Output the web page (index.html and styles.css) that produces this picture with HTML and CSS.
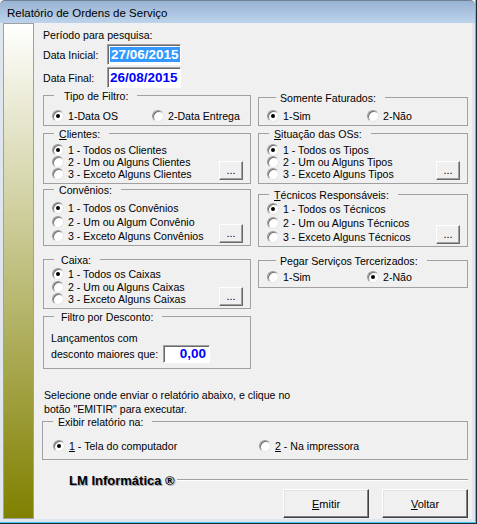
FILE: index.html
```html
<!DOCTYPE html>
<html lang="pt-BR">
    <head>
        <meta charset="UTF-8" />
        <title>Relatório de Ordens de Serviço</title>
        <link rel="stylesheet" href="styles.css">
    </head>
    <body>
        <div class="window">
        <div class="window-edge">
            <div class="titlebar">Relatório de Ordens de Serviço</div>
            <div class="frame">
                <div class="side-strip"></div>
                <div class="content">
                    <div class="caption">Período para pesquisa:</div>
                    <div class="date-row">
                        <span class="date-label">Data Inicial:</span>
                        <div class="date-box"><span class="selected">27/06/2015</span></div>
                    </div>
                    <div class="date-row">
                        <span class="date-label">Data Final:</span>
                        <div class="date-box">26/08/2015</div>
                    </div>

                    <div class="columns">
                        <div class="column">
                            <div class="group tipo">
                                <div class="group-title"><span>Tipo de Filtro:</span></div>
                                <div class="group-body">
                                    <div class="opts-2">
                                        <div class="opt"><i class="radio on"></i>1-Data OS</div>
                                        <div class="opt"><i class="radio"></i>2-Data Entrega</div>
                                    </div>
                                </div>
                            </div>

                            <div class="group clientes">
                                <div class="group-title"><span><u>C</u>lientes:</span></div>
                                <div class="group-body list rows-12">
                                    <div class="opts">
                                        <div class="opt"><i class="radio on"></i>1 - Todos os Clientes</div>
                                        <div class="opt"><i class="radio"></i>2 - Um ou Alguns Clientes</div>
                                        <div class="opt"><i class="radio"></i>3 - Exceto Alguns Clientes</div>
                                    </div>
                                    <button class="more">...</button>
                                </div>
                            </div>

                            <div class="group convenios">
                                <div class="group-title"><span>Convênios:</span></div>
                                <div class="group-body list rows-14">
                                    <div class="opts">
                                        <div class="opt"><i class="radio on"></i>1 - Todos os Convênios</div>
                                        <div class="opt"><i class="radio"></i>2 - Um ou Algum Convênio</div>
                                        <div class="opt"><i class="radio"></i>3 - Exceto Alguns Convênios</div>
                                    </div>
                                    <button class="more">...</button>
                                </div>
                            </div>

                            <div class="group caixa">
                                <div class="group-title"><span>Caixa:</span></div>
                                <div class="group-body list rows-125">
                                    <div class="opts">
                                        <div class="opt"><i class="radio on"></i>1 - Todos os Caixas</div>
                                        <div class="opt"><i class="radio"></i>2 - Um ou Alguns Caixas</div>
                                        <div class="opt"><i class="radio"></i>3 - Exceto Alguns Caixas</div>
                                    </div>
                                    <button class="more">...</button>
                                </div>
                            </div>

                            <div class="group desconto">
                                <div class="group-title"><span>Filtro por Desconto:</span></div>
                                <div class="group-body">
                                    <div class="desc-line">Lançamentos com</div>
                                    <div class="desc-row">
                                        <span class="desc-label">desconto maiores que:</span>
                                        <div class="num-box">0,00</div>
                                    </div>
                                </div>
                            </div>
                        </div>

                        <div class="column">
                            <div class="group somente">
                                <div class="group-title"><span>Somente Faturados:</span></div>
                                <div class="group-body">
                                    <div class="opts-2">
                                        <div class="opt"><i class="radio on"></i>1-Sim</div>
                                        <div class="opt"><i class="radio"></i>2-Não</div>
                                    </div>
                                </div>
                            </div>

                            <div class="group situacao">
                                <div class="group-title"><span><u>S</u>ituação das OSs:</span></div>
                                <div class="group-body list rows-12">
                                    <div class="opts">
                                        <div class="opt"><i class="radio on"></i>1 - Todos os Tipos</div>
                                        <div class="opt"><i class="radio"></i>2 - Um ou Alguns Tipos</div>
                                        <div class="opt"><i class="radio"></i>3 - Exceto Alguns Tipos</div>
                                    </div>
                                    <button class="more">...</button>
                                </div>
                            </div>

                            <div class="group tecnicos">
                                <div class="group-title"><span><u>T</u>écnicos Responsáveis:</span></div>
                                <div class="group-body list rows-14">
                                    <div class="opts">
                                        <div class="opt"><i class="radio on"></i>1 - Todos os Técnicos</div>
                                        <div class="opt"><i class="radio"></i>2 - Um ou Alguns Técnicos</div>
                                        <div class="opt"><i class="radio"></i>3 - Exceto Alguns Técnicos</div>
                                    </div>
                                    <button class="more">...</button>
                                </div>
                            </div>

                            <div class="group pegar">
                                <div class="group-title"><span>Pegar Serviços Tercerizados:</span></div>
                                <div class="group-body">
                                    <div class="opts-2">
                                        <div class="opt"><i class="radio"></i>1-Sim</div>
                                        <div class="opt"><i class="radio on"></i>2-Não</div>
                                    </div>
                                </div>
                            </div>
                        </div>
                    </div>

                    <p class="hint">Selecione onde enviar o relatório abaixo, e clique no<br>botão "EMITIR" para executar.</p>

                    <div class="group saida">
                        <div class="group-title"><span>Exibir relatório na:</span></div>
                        <div class="group-body">
                            <div class="opts-out">
                                <div class="opt"><i class="radio on"></i><u>1</u>&nbsp;- Tela do computador</div>
                                <div class="opt"><i class="radio"></i><u>2</u>&nbsp;- Na impressora</div>
                            </div>
                        </div>
                    </div>

                    <div class="brand"><span>LM Informática ®</span></div>

                    <div class="actions">
                        <button class="btn"><u>E</u>mitir</button>
                        <button class="btn"><u>V</u>oltar</button>
                    </div>
                </div>
            </div>
        </div>
        </div>
    </body>
</html>
```

FILE: styles.css
```css
* {
    box-sizing: border-box;
}
body {
    margin: 0;
    font-family: "Liberation Sans", Arial, sans-serif;
    font-size: 10.6px;
    color: #000;
    background: #f0f0f0;
}
.window {
    width: 477px;
    height: 524px;
    border-right: 1px solid #1d2a38;
    border-bottom: 1px solid #1d2a38;
}
.window-edge {
    height: 100%;
    display: flex;
    flex-direction: column;
    border-right: 1px solid #3fc6f0;
    border-bottom: 1px solid #3fc6f0;
}
.titlebar {
    height: 23px;
    padding: 2px 0 0 7px;
    line-height: 21px;
    font-size: 11.5px;
    background: linear-gradient(#98b3d3, #bcd3eb);
    border-top: 1px solid #6f8194;
    border-radius: 5px 5px 0 0;
}
.frame {
    flex: 1;
    display: flex;
    padding: 0 3px 3px 3px;
    background: #dfe6ee;
}
.side-strip {
    width: 31px;
    border: 1px solid #a0a0a0;
    background: linear-gradient(#fff, #808000);
}
.content {
    flex: 1;
    display: flex;
    flex-direction: column;
    padding: 6px 4px 0 9px;
    background: #f0f0f0;
}
.caption {
    line-height: 13px;
}
.date-row {
    display: flex;
    align-items: center;
    height: 21px;
    margin-top: 2px;
}
.date-label {
    width: 64px;
}
.date-box {
    width: 74px;
    height: 21px;
    padding: 2px 0 0 2px;
    background: #fff;
    border: 1px solid;
    border-color: #a0a0a0 #fff #fff #a0a0a0;
    box-shadow: inset 1px 1px 0 #696969;
    font-size: 13.5px;
    font-weight: bold;
    line-height: 15px;
    color: #0000ff;
}
.date-box .selected {
    display: inline-block;
    padding: 0 1px;
    background: #3399ff;
    color: #fff;
}
.columns {
    display: grid;
    grid-template-columns: 208px 210px;
    column-gap: 7px;
    align-items: start;
    margin-top: 2px;
}
.column {
    display: flex;
    flex-direction: column;
}

/* group boxes */
.group {
    display: flex;
    flex-direction: column;
}
.group-title {
    display: flex;
    height: 13px;
    line-height: 13px;
}
.group-title::before,
.group-title::after {
    content: "";
    margin-top: 5px;
    border-top: 1px solid #a0a0a0;
}
.group-title::before {
    width: 10px;
    border-left: 1px solid #a0a0a0;
}
.group-title::after {
    flex: 1;
    border-right: 1px solid #a0a0a0;
}
.group-title span {
    padding: 0 9px 0 5px;
}
.group-body {
    border: 1px solid #a0a0a0;
    border-top: none;
}
.group-body.list {
    display: flex;
    padding-left: 8px;
    padding-right: 7px;
}
.opts {
    flex: 1;
    display: flex;
    flex-direction: column;
}
.opt {
    display: flex;
    align-items: center;
    height: 13px;
    white-space: nowrap;
}
.rows-12 .opt {
    height: 12px;
}
.rows-14 .opt {
    height: 14px;
}
.rows-125 .opt {
    height: 12.5px;
}
.opts-2 {
    display: grid;
    grid-template-columns: 100px auto;
}
.opts-out {
    display: grid;
    grid-template-columns: 206px auto;
}
.radio {
    display: flex;
    align-items: center;
    justify-content: center;
    flex-shrink: 0;
    width: 12px;
    height: 12px;
    margin-right: 4px;
    border-radius: 50%;
    background: #fff;
    border: 1px solid;
    border-color: #9a9a9a #e6e6e6 #e6e6e6 #9a9a9a;
    box-shadow: inset 1px 1px 0 #707070;
}
.radio.on::after {
    content: "";
    width: 4px;
    height: 4px;
    border-radius: 50%;
    background: #000;
}
.more {
    align-self: flex-end;
    width: 24px;
    height: 19px;
    padding: 0;
    font-family: "Liberation Sans", Arial, sans-serif;
    font-size: 11px;
    line-height: 15px;
    background: #f0f0f0;
    border: 1px solid;
    border-color: #fff #696969 #696969 #fff;
    box-shadow: inset -1px -1px 0 #a0a0a0;
}

.tipo .group-title span {
    padding-left: 10px;
}
.tipo .group-body {
    padding: 6px 0 3px 8px;
}
.clientes {
    margin-top: 2px;
}
.clientes .group-body {
    padding-top: 3px;
    padding-bottom: 3px;
}
.convenios .group-body {
    padding-top: 4px;
    padding-bottom: 2px;
}
.caixa {
    margin-top: 8px;
}
.caixa .group-title span,
.desconto .group-title span {
    padding-left: 7px;
}
.caixa .group-body {
    padding-top: 1px;
    padding-bottom: 2px;
}
.desconto {
    margin-top: 2.5px;
}
.desconto .group-body {
    padding: 8px 0 5px 7px;
}
.desc-line {
    line-height: 13px;
}
.desc-row {
    display: flex;
    align-items: center;
}
.desc-label {
    width: 112px;
}
.num-box {
    width: 47px;
    height: 18px;
    padding-right: 3px;
    text-align: right;
    background: #fff;
    border: 1px solid;
    border-color: #a0a0a0 #fff #fff #a0a0a0;
    box-shadow: inset 1px 1px 0 #696969;
    font-size: 13.5px;
    font-weight: bold;
    line-height: 16px;
    color: #0000ff;
}

.somente {
    margin-top: 2px;
}
.somente .group-title::before,
.pegar .group-title::before {
    width: 17px;
}
.somente .group-title span,
.pegar .group-title span {
    padding-left: 4px;
}
.somente .group-body {
    padding: 4px 0 3px 8px;
}
.situacao {
    margin-top: 2px;
}
.situacao .group-body {
    padding-top: 3px;
    padding-bottom: 3px;
}
.tecnicos {
    margin-top: 5px;
}
.tecnicos .group-body {
    padding-top: 0;
    padding-bottom: 2px;
}
.pegar {
    margin-top: 8px;
}
.pegar .group-body {
    padding: 2px 0 4px 8px;
}

.hint {
    margin: 19px 0 0 1px;
    line-height: 14px;
}
.saida {
    margin-left: -1px;
}
.saida .group-body {
    padding: 10px 0 7px 10px;
}

.brand {
    display: flex;
    align-items: center;
    height: 14px;
    margin-top: 13px;
    padding-left: 26px;
}
.brand span {
    font-size: 13px;
    font-weight: bold;
    text-shadow: 1px 1px 0 #a0a8b4;
}
.brand::after {
    content: "";
    flex: 1;
    margin-left: 2px;
    border-top: 1px solid #a0a0a0;
    border-bottom: 1px solid #fff;
}
.actions {
    display: flex;
    justify-content: flex-end;
    gap: 13px;
    margin-top: 2px;
}
.btn {
    width: 86px;
    height: 29px;
    padding: 0;
    font-family: "Liberation Sans", Arial, sans-serif;
    font-size: 11px;
    color: #000;
    background: #f0f0f0;
    border: 1px solid;
    border-color: #fff #404040 #404040 #fff;
    box-shadow: inset -1px -1px 0 #808080, inset 1px 1px 0 #e3e3e3;
}
```
